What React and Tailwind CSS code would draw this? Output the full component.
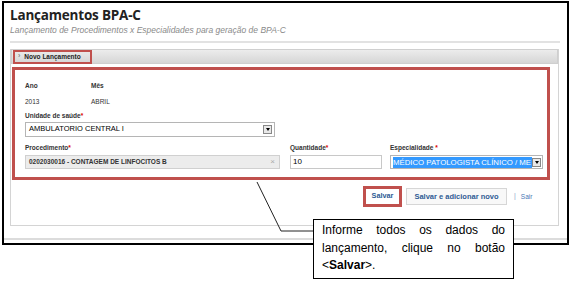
const LABEL = "text-[6.5px] font-bold text-[#333] leading-none";
const REQ = <span className="text-[#d00]">*</span>;

function SelectArrow() {
  return (
    <span className="w-[9px] h-[9px] border border-[#888] bg-[#e8e8e8] flex items-center justify-center shrink-0">
      <span className="w-0 h-0 border-l-[2.5px] border-r-[2.5px] border-t-[3px] border-l-transparent border-r-transparent border-t-black" />
    </span>
  );
}

export default function App() {
  return (
    <div className="relative w-[574px] h-[281px] bg-white font-['Liberation_Sans',Arial,sans-serif] overflow-hidden">
      {/* screenshot frame */}
      <div className="ml-[2px] mt-[1px] w-[567px] h-[244px] border-2 border-black flex flex-col">
        <div className="pl-[6px] pt-[3px] shrink-0">
          <h1 className="font-['Open_Sans',sans-serif] font-bold text-[13.5px] leading-[19px] text-[#222] tracking-[-0.2px]">
            Lançamentos BPA-C
          </h1>
          <p className="italic text-[8.5px] leading-[11px] text-[#8a8a8a]">
            Lançamento de Procedimentos x Especialidades para geração de BPA-C
          </p>
        </div>
        <div className="ml-[6px] mt-[5px] w-[550px] h-[2px] bg-[#e2e2e2] shrink-0" />

        {/* panel */}
        <div className="ml-[6px] mt-[6px] w-[549px] h-[177px] border border-[#d4d4d4] border-t-0 flex flex-col shrink-0">
          <div className="h-[15px] bg-gradient-to-b from-[#ececec] to-[#d6d6d6] border border-[#cfcfcf] flex items-center shrink-0">
            <div className="ml-[1px] w-[79px] h-[14px] border-2 border-[#c0504d] flex items-center pl-[3px] gap-[4px] text-[6.5px] font-bold text-[#222]">
              <span className="text-[#888] text-[7px]">›</span> Novo Lançamento
            </div>
          </div>

          {/* form (highlighted) */}
          <div className="ml-[1px] mt-[3px] w-[538px] h-[113px] border-[3px] border-[#c0504d] pl-[10px] pt-[13px] shrink-0">
            <div className="flex">
              <div className="w-[66px]">
                <div className={LABEL}>Ano</div>
                <div className="mt-[9px] text-[6.5px] leading-none text-[#333]">2013</div>
              </div>
              <div>
                <div className={LABEL}>Mês</div>
                <div className="mt-[9px] text-[6.5px] leading-none text-[#333]">ABRIL</div>
              </div>
            </div>
            <div className={`${LABEL} mt-[8px]`}>Unidade de saúde{REQ}</div>
            <div className="mt-[2px] w-[250px] h-[15px] border border-[#b5b5b5] bg-white flex items-center justify-between pl-[3px] pr-[2px]">
              <span className="text-[7.5px] text-black">AMBULATORIO CENTRAL I</span>
              <SelectArrow />
            </div>
            <div className="flex mt-[8px]">
              <div className="w-[265px]">
                <div className={LABEL}>Procedimento{REQ}</div>
                <div className="mt-[4px] w-[255px] h-[14px] border border-[#d0d0d0] bg-[#ececec] flex items-center justify-between pl-[3px] pr-[4px]">
                  <span className="text-[6.5px] font-bold text-[#333]">0202030016 - CONTAGEM DE LINFOCITOS B</span>
                  <span className="text-[8px] text-[#aaa] leading-none">×</span>
                </div>
              </div>
              <div className="w-[100px]">
                <div className={LABEL}>Quantidade{REQ}</div>
                <div className="mt-[4px] w-[92px] h-[14px] border border-[#c8c8c8] bg-white flex items-center pl-[2px] text-[8px] text-black">
                  10
                </div>
              </div>
              <div>
                <div className={LABEL}>Especialidade {REQ}</div>
                <div className="mt-[4px] w-[153px] h-[14px] border border-[#b5b5b5] bg-white flex items-center justify-between pl-[2px] pr-[1px]">
                  <span className="bg-[#3399ff] text-white text-[7.8px] leading-[11px] whitespace-nowrap overflow-hidden w-[139px]">
                    MÉDICO PATOLOGISTA CLÍNICO / ME
                  </span>
                  <SelectArrow />
                </div>
              </div>
            </div>
          </div>

          {/* actions */}
          <div className="mt-[6px] flex items-center pl-[352px] shrink-0">
            <div className="w-[39px] h-[21px] border-[3px] border-[#c0504d] flex items-center justify-center text-[7.3px] font-bold text-[#2e5b94]">
              Salvar
            </div>
            <div className="ml-[4px] w-[101px] h-[17px] border border-[#d6d6d6] bg-[#f8f8f8] flex items-center justify-center text-[7.5px] font-bold text-[#2e5b94]">
              Salvar e adicionar novo
            </div>
            <span className="ml-[7px] text-[7px] text-[#8aa2c8]">|</span>
            <span className="ml-[5px] text-[6.5px] text-[#4a78b5]">Sair</span>
          </div>
        </div>
        <div className="mt-[12px] h-[2px] bg-[#dcdcdc] shrink-0" />
      </div>

      {/* callout connector */}
      <svg className="absolute left-0 top-0" width="574" height="281">
        <polyline points="257,182 281,231 313,231" fill="none" stroke="#222" strokeWidth="1" />
      </svg>

      {/* callout box */}
      <div className="absolute left-[313px] top-[219px] w-[201px] h-[60px] border border-black bg-white px-[8px] pt-[2px] text-[12px] leading-[17.5px] text-black text-justify [text-align-last:left]">
        Informe todos os dados do lançamento, clique no botão &lt;<b>Salvar</b>&gt;.
      </div>
    </div>
  );
}
